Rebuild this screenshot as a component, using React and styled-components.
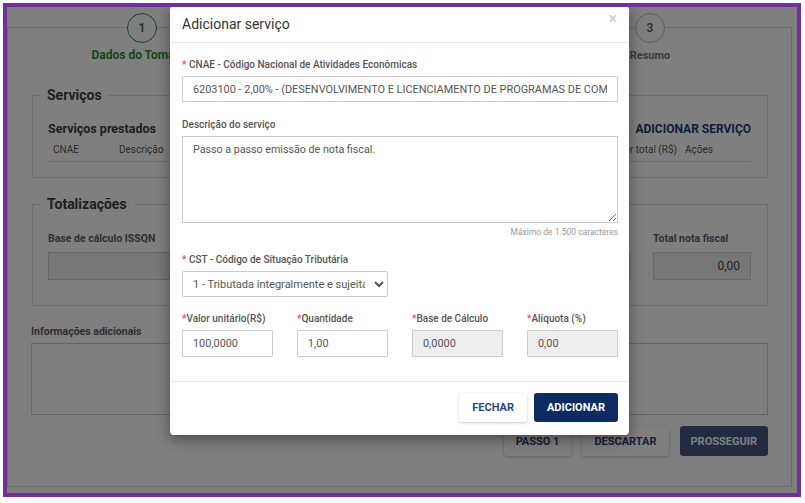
import React from "react";
import styled, { createGlobalStyle } from "styled-components";

const GlobalStyle = createGlobalStyle`
  * { box-sizing: border-box; }
  html, body { margin: 0; padding: 0; }
  body {
    width: 805px;
    height: 503px;
    overflow: hidden;
    background: #fff;
    font-family: Roboto, "Liberation Sans", sans-serif;
  }
`;

const Frame = styled.div`
  width: 805px;
  height: 503px;
  padding: 3px 4px 6px 3px;
`;

const Border = styled.div`
  height: 100%;
  border: 4px solid #7030a0;
`;

const Screen = styled.div`
  position: relative;
  height: 100%;
  background: #fff;
  padding: 20px 5px 6px 0;
  overflow: hidden;
`;

const Card = styled.div`
  height: 100%;
  border: 1px solid #d6d6d6;
  display: flex;
  flex-direction: column;
`;

const Stepper = styled.div`
  display: flex;
  gap: 134px;
  padding-left: 74px;
  margin-top: -15px;
`;

const Step = styled.div`
  width: 120px;
  display: flex;
  flex-direction: column;
  align-items: center;
`;

const Circle = styled.div`
  width: 30px;
  height: 30px;
  border-radius: 50%;
  background: #fff;
  border: 1px solid ${({ active }) => (active ? "#2e8b3a" : "#bdbdbd")};
  color: ${({ active }) => (active ? "#2e8b3a" : "#666")};
  display: flex;
  align-items: center;
  justify-content: center;
  font-size: 12px;
  font-weight: 700;
`;

const StepLabel = styled.div`
  margin-top: 6px;
  font-size: ${({ active }) => (active ? 12 : 11)}px;
  line-height: 13px;
  font-weight: 700;
  white-space: nowrap;
  color: ${({ active }) => (active ? "#2e8b3a" : "#777")};
`;

const Fieldset = styled.fieldset`
  margin: ${({ top }) => top}px 23px 0 24px;
  padding: 0 16px ${({ bottom }) => bottom}px 15px;
  border: 1px solid #dcdcdc;
  min-inline-size: 0;
`;

const Legend = styled.legend`
  margin-left: -8px;
  padding: 0 7px;
  font-size: 14px;
  font-weight: 700;
  color: #404040;
`;

const SectionHead = styled.div`
  display: flex;
  justify-content: space-between;
  align-items: center;
  margin-top: 18px;
`;

const SubTitle = styled.div`
  font-size: 12.5px;
  font-weight: 700;
  color: #404040;
`;

const LinkButton = styled.div`
  font-size: 12px;
  font-weight: 700;
  color: #1a3d7c;
`;

const TableHead = styled.div`
  display: grid;
  grid-template-columns: 58px 1fr 90px 100px auto auto;
  gap: 8px;
  padding: 8px 38px 6px 5px;
  border-bottom: 1px solid #dcdcdc;
  font-size: 10px;
  color: #555;
`;

const TotalsRow = styled.div`
  display: grid;
  grid-template-columns: repeat(4, 1fr) 98px;
  gap: 23px;
  margin-top: 20px;
`;

const PageLabel = styled.div`
  font-size: 10.5px;
  font-weight: 700;
  color: #606060;
  white-space: nowrap;
  margin-bottom: ${({ gap }) => gap || 7}px;
`;

const GreyBox = styled.div`
  height: 28px;
  background: #eee;
  border: 1px solid #ccc;
  font-size: 12px;
  color: #444;
  display: flex;
  align-items: center;
  justify-content: flex-end;
  padding: 0 10px;
`;

const Extra = styled.div`
  margin: 19px 23px 0 23px;
`;

const PageArea = styled.div`
  height: 72px;
  border: 1px solid #ccc;
`;

const PageActions = styled.div`
  display: flex;
  justify-content: flex-end;
  gap: 11px;
  margin: 11px 23px 0 0;
`;

const PageButton = styled.div`
  height: 30px;
  padding: 0 ${({ pad }) => pad}px;
  display: flex;
  align-items: center;
  border-radius: 3px;
  font-size: 11px;
  font-weight: 700;
  background: ${({ primary }) => (primary ? "#1a3566" : "#fff")};
  color: ${({ primary }) => (primary ? "#ffffff" : "#2a4170")};
  box-shadow: ${({ primary }) => (primary ? "none" : "0 1px 3px rgba(0,0,0,0.25)")};
  opacity: ${({ primary }) => (primary ? 0.82 : 1)};
`;

const Overlay = styled.div`
  position: absolute;
  inset: 0;
  background: rgba(0, 0, 0, 0.5);
`;

const Modal = styled.div`
  position: absolute;
  top: -1px;
  left: 163px;
  width: 459px;
  background: #fff;
  border-radius: 4px;
  box-shadow: 0 4px 14px rgba(0, 0, 0, 0.45);
`;

const ModalHeader = styled.div`
  height: 37px;
  display: flex;
  align-items: center;
  justify-content: space-between;
  padding: 0 12px;
  border-bottom: 1px solid #e6e6e6;
`;

const ModalTitle = styled.div`
  font-size: 14px;
  color: #333;
`;

const Close = styled.div`
  font-size: 16px;
  color: #c4c4c4;
  margin-top: -12px;
`;

const ModalBody = styled.div`
  padding: 15px 11px 24px 12px;
  display: flex;
  flex-direction: column;
`;

const Field = styled.div`
  margin-top: ${({ top }) => top || 0}px;
  display: flex;
  flex-direction: column;
`;

const Label = styled.label`
  font-size: 10px;
  line-height: 13px;
  font-weight: 500;
  color: #555;
  margin-bottom: 5px;
  white-space: nowrap;
`;

const Star = styled.span`
  color: #d9534f;
`;

const Input = styled.input`
  height: ${({ h }) => h || 26}px;
  width: 100%;
  border: 1px solid #ccc;
  border-radius: 1px;
  padding: 0 10px;
  font-family: Roboto, "Liberation Sans", sans-serif;
  font-size: 10.9px;
  color: #555;
  background: ${({ disabled }) => (disabled ? "#eee" : "#fff")};
  outline: none;
`;

const TextArea = styled.textarea`
  height: 87px;
  width: 100%;
  border: 1px solid #ccc;
  padding: 6px 10px;
  font-family: Roboto, "Liberation Sans", sans-serif;
  font-size: 10.7px;
  color: #555;
  resize: vertical;
  outline: none;
`;

const Hint = styled.div`
  margin-top: 4px;
  text-align: right;
  font-size: 8.5px;
  line-height: 11px;
  color: #999;
`;

const Select = styled.select`
  height: 26px;
  width: 206px;
  border: 1px solid #ccc;
  border-radius: 2px;
  padding: 0 6px;
  font-family: Roboto, "Liberation Sans", sans-serif;
  font-size: 11px;
  color: #555;
  background: #fff;
  outline: none;
`;

const ValuesRow = styled.div`
  display: grid;
  grid-template-columns: repeat(4, 91px);
  column-gap: 24px;
  margin-top: 15px;
`;

const ModalFooter = styled.div`
  display: flex;
  justify-content: flex-end;
  gap: 7px;
  padding: 11px 11px 13px;
  border-top: 1px solid #e6e6e6;
`;

const ModalButton = styled.button`
  height: 29px;
  padding: 0 ${({ pad }) => pad}px;
  border: none;
  border-radius: 3px;
  font-family: Roboto, "Liberation Sans", sans-serif;
  font-size: 11px;
  font-weight: 700;
  background: ${({ primary }) => (primary ? "#0d2b63" : "#fff")};
  color: ${({ primary }) => (primary ? "#fff" : "#2a4a7f")};
  box-shadow: ${({ primary }) => (primary ? "none" : "0 1px 3px rgba(0,0,0,0.22)")};
`;

const ReqLabel = ({ children, spaced }) => (
  <Label>
    <Star>*</Star>
    {spaced ? " " : ""}
    {children}
  </Label>
);

export default function App() {
  return (
    <Frame>
      <GlobalStyle />
      <Border>
        <Screen>
          <Card>
            <Stepper>
              <Step>
                <Circle active>1</Circle>
                <StepLabel active>Dados do Tomador</StepLabel>
              </Step>
              <Step>
                <Circle>2</Circle>
                <StepLabel>Serviços</StepLabel>
              </Step>
              <Step>
                <Circle>3</Circle>
                <StepLabel>Resumo</StepLabel>
              </Step>
            </Stepper>

            <Fieldset top={25} bottom={15}>
              <Legend>Serviços</Legend>
              <SectionHead>
                <SubTitle>Serviços prestados</SubTitle>
                <LinkButton>ADICIONAR SERVIÇO</LinkButton>
              </SectionHead>
              <TableHead>
                <span>CNAE</span>
                <span>Descrição</span>
                <span>Quantidade</span>
                <span>Valor unitário (R$)</span>
                <span>Valor total (R$)</span>
                <span>Ações</span>
              </TableHead>
            </Fieldset>

            <Fieldset top={18} bottom={25}>
              <Legend>Totalizações</Legend>
              <TotalsRow>
                <div>
                  <PageLabel>Base de cálculo ISSQN</PageLabel>
                  <GreyBox />
                </div>
                <div>
                  <PageLabel>Valor ISSQN</PageLabel>
                  <GreyBox />
                </div>
                <div>
                  <PageLabel>Valor retenções</PageLabel>
                  <GreyBox />
                </div>
                <div>
                  <PageLabel>Descontos</PageLabel>
                  <GreyBox />
                </div>
                <div>
                  <PageLabel>Total nota fiscal</PageLabel>
                  <GreyBox>0,00</GreyBox>
                </div>
              </TotalsRow>
            </Fieldset>

            <Extra>
              <PageLabel gap={5}>Informações adicionais</PageLabel>
              <PageArea />
            </Extra>

            <PageActions>
              <PageButton pad={12}>PASSO 1</PageButton>
              <PageButton pad={12}>DESCARTAR</PageButton>
              <PageButton pad={11} primary>
                PROSSEGUIR
              </PageButton>
            </PageActions>
          </Card>

          <Overlay />

          <Modal>
            <ModalHeader>
              <ModalTitle>Adicionar serviço</ModalTitle>
              <Close>×</Close>
            </ModalHeader>
            <ModalBody>
              <Field>
                <ReqLabel spaced>CNAE - Código Nacional de Atividades Econômicas</ReqLabel>
                <Input
                  readOnly
                  value="6203100 - 2,00% - (DESENVOLVIMENTO E LICENCIAMENTO DE PROGRAMAS DE COMPUTADOR NÃO-CUSTOMIZÁVEIS)"
                />
              </Field>
              <Field top={16}>
                <Label>Descrição do serviço</Label>
                <TextArea readOnly value="Passo a passo emissão de nota fiscal." />
                <Hint>Máximo de 1.500 caracteres</Hint>
              </Field>
              <Field top={15}>
                <ReqLabel spaced>CST - Código de Situação Tributária</ReqLabel>
                <Select defaultValue="1">
                  <option value="1">
                    1 - Tributada integralmente e sujeita ao regime do Simples Nacional
                  </option>
                </Select>
              </Field>
              <ValuesRow>
                <Field>
                  <ReqLabel>Valor unitário(R$)</ReqLabel>
                  <Input h={27} readOnly value="100,0000" />
                </Field>
                <Field>
                  <ReqLabel>Quantidade</ReqLabel>
                  <Input h={27} readOnly value="1,00" />
                </Field>
                <Field>
                  <ReqLabel>Base de Cálculo</ReqLabel>
                  <Input h={27} disabled value="0,0000" />
                </Field>
                <Field>
                  <ReqLabel>Alíquota (%)</ReqLabel>
                  <Input h={27} disabled value="0,00" />
                </Field>
              </ValuesRow>
            </ModalBody>
            <ModalFooter>
              <ModalButton pad={13}>FECHAR</ModalButton>
              <ModalButton pad={13} primary>
                ADICIONAR
              </ModalButton>
            </ModalFooter>
          </Modal>
        </Screen>
      </Border>
    </Frame>
  );
}
